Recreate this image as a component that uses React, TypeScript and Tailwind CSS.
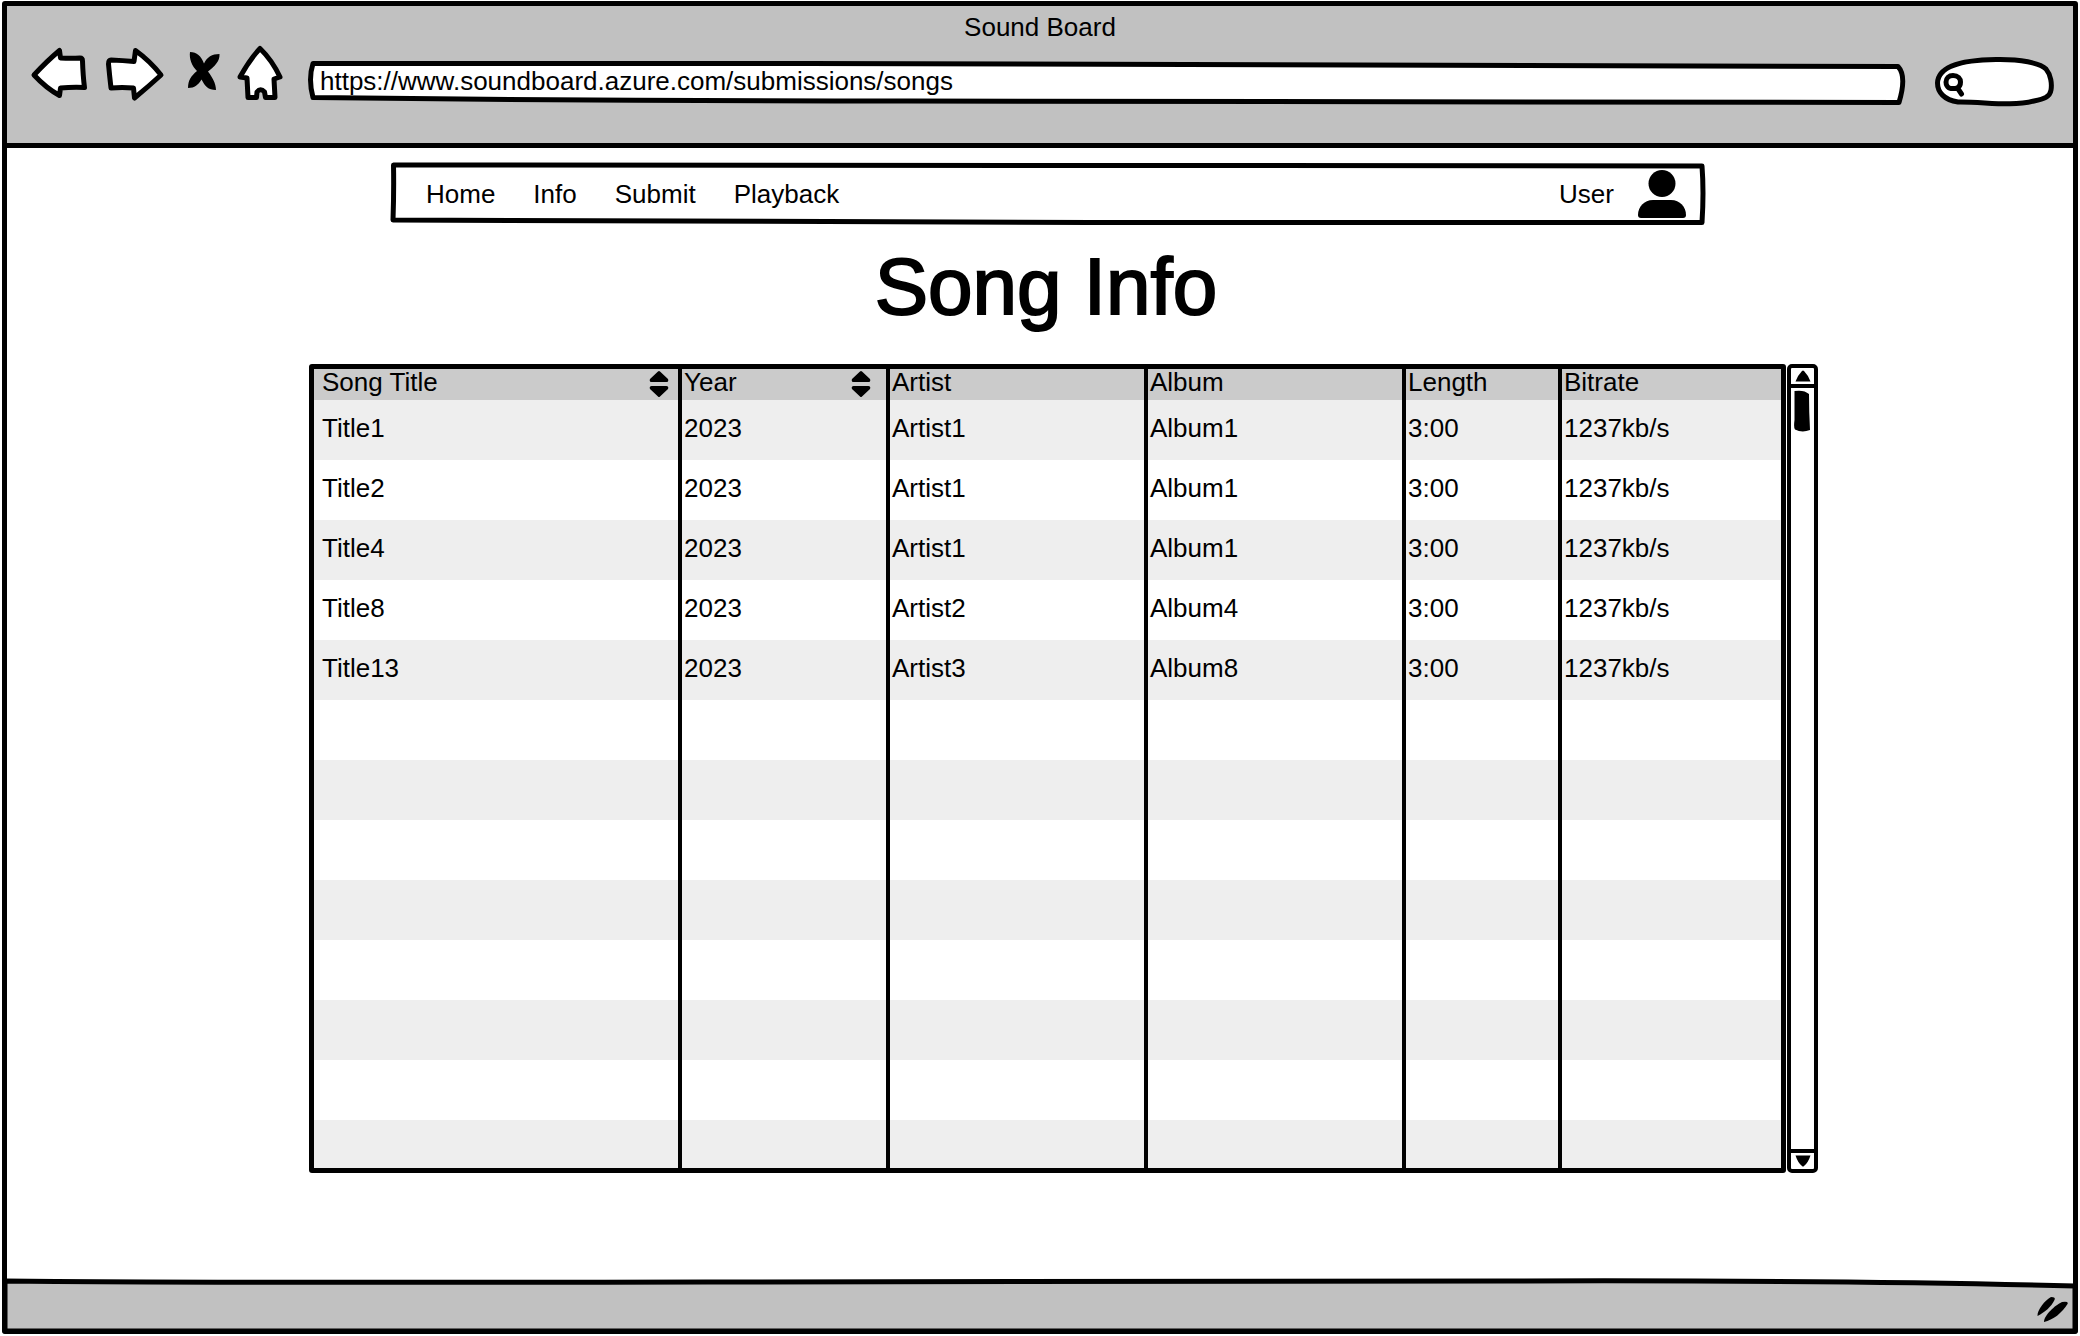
import type { ReactNode } from "react";

type Song = {
  title: string;
  year: string;
  artist: string;
  album: string;
  length: string;
  bitrate: string;
};

const songs: Song[] = [
  { title: "Title1", year: "2023", artist: "Artist1", album: "Album1", length: "3:00", bitrate: "1237kb/s" },
  { title: "Title2", year: "2023", artist: "Artist1", album: "Album1", length: "3:00", bitrate: "1237kb/s" },
  { title: "Title4", year: "2023", artist: "Artist1", album: "Album1", length: "3:00", bitrate: "1237kb/s" },
  { title: "Title8", year: "2023", artist: "Artist2", album: "Album4", length: "3:00", bitrate: "1237kb/s" },
  { title: "Title13", year: "2023", artist: "Artist3", album: "Album8", length: "3:00", bitrate: "1237kb/s" },
];

const columns: { key: keyof Song; label: string; sortable?: boolean; width: string }[] = [
  { key: "title", label: "Song Title", sortable: true, width: "w-[364px]" },
  { key: "year", label: "Year", sortable: true, width: "w-[208px]" },
  { key: "artist", label: "Artist", width: "w-[258px]" },
  { key: "album", label: "Album", width: "w-[258px]" },
  { key: "length", label: "Length", width: "w-[156px]" },
  { key: "bitrate", label: "Bitrate", width: "w-auto" },
];

const emptyRows = [0, 1, 2, 3, 4, 5, 6, 7];

/* Hand-drawn outline that stretches with the box it sits in. */
function SketchOutline({ viewBox, d, fill = "#fff" }: { viewBox: string; d: string; fill?: string }) {
  return (
    <svg
      aria-hidden="true"
      viewBox={viewBox}
      preserveAspectRatio="none"
      className="pointer-events-none absolute inset-0 h-full w-full overflow-visible"
    >
      <path d={d} fill={fill} stroke="#000" strokeWidth="5" strokeLinejoin="round" strokeLinecap="round" vectorEffect="non-scaling-stroke" />
    </svg>
  );
}

function ToolButton({ label, viewBox, width, children }: { label: string; viewBox: string; width: string; children: ReactNode }) {
  return (
    <button type="button" aria-label={label} className={"h-16 shrink-0 " + width}>
      <svg viewBox={viewBox} className="block h-full w-full" strokeWidth="5" strokeLinejoin="round" strokeLinecap="round">
        {children}
      </svg>
    </button>
  );
}

function BrowserBar() {
  return (
    <header className="border-b-5 border-black bg-[#c1c1c1] pt-[3px]">
      <div className="text-center leading-9">Sound Board</div>
      <div className="flex gap-3 pr-[17px] pb-[34px] pl-[21px]">
        <ToolButton label="Back" viewBox="28 45 64 64" width="w-16">
          <path d="M34 75 Q47 61 59.5 50.5 L60.5 58 Q71 58.5 80 58 Q82.500 58 82.500 61 Q83 76 84.500 87.500 Q72 87 60.500 88 L59.500 95.500 Q46 88 34 75Z" fill="#fff" stroke="#000" />
        </ToolButton>
        <ToolButton label="Forward" viewBox="104 45 64 64" width="w-16">
          <path d="M111 60 Q123 60.500 134 61.500 L135.500 50.500 Q150 61 161 75 Q149 86 134.500 98 L133.500 88 Q122 87 111 88 Q109.500 75 108.500 64 Q108.500 60 111 60Z" fill="#fff" stroke="#000" />
        </ToolButton>
        <ToolButton label="Stop" viewBox="180 45 44 64" width="w-11">
          <path d="M190 52 C197 52 201 56 204 63.500 C207 57 212 54 219.500 54 C220 61 215 66 208 71.500 C212 77 216 83 216 90 C208 90 205 86 201.500 79.500 C198 85 195 88 188 88 C188 80 191 76 197 71 C192 66 189 59 190 52Z" fill="#000" />
        </ToolButton>
        <ToolButton label="Home" viewBox="236 45 52 64" width="w-13">
          <path d="M260 48.500 Q272 60 280 77 L274 79 Q274.500 88 275 97.500 L265.500 97.500 L264.500 92 Q260.500 87.500 257 92 L256.500 97.500 L248 97.500 Q247.500 87 247 78 L240 77 Q250 59 260 48.500Z" fill="#fff" stroke="#000" />
        </ToolButton>
        <div className="relative mt-4 ml-2 h-11 min-w-0 flex-1">
          <SketchOutline viewBox="0 0 1598 44" d="M5 2.500 L500 2.500 Q1000 2.500 1590 5.500 Q1599 15 1591 41.500 Q1100 42 600 40 Q300 40 5 36.500 Q0 18 5 2.500Z" />
          <input
            type="text"
            aria-label="Address"
            defaultValue="https://www.soundboard.azure.com/submissions/songs"
            className="relative h-full w-full bg-transparent pr-3 pb-[3px] pl-3 outline-none"
          />
        </div>
        <div className="relative ml-4 h-16 w-[122px] shrink-0">
          <svg aria-hidden="true" viewBox="1934 45 122 64" className="absolute inset-0 h-full w-full" fill="none" stroke="#000" strokeWidth="5" strokeLinecap="round">
            <path d="M1937.500 83 C1938 68 1958 60 1996 59.500 C2020 59 2040 63 2046 69 C2051 75 2052 84 2051 90 C2050 97 2044 99 2034 101 C2010 107 1984 101.500 1958 102 C1944 100 1937.500 92 1937.500 83Z" fill="#fff" />
            <path d="M1953 75.500 C1958 75.500 1960.500 79 1960.500 82 C1960.500 88 1956 89 1951 88.500 C1947 88 1946 84 1946 82 C1946 78 1949 75.500 1953 75.500Z M1957.500 88 L1961.500 94" />
          </svg>
          <input type="search" aria-label="Search" className="relative h-full w-full bg-transparent pr-4 pl-8 outline-none" />
        </div>
      </div>
    </header>
  );
}

function SiteNav() {
  return (
    <nav className="relative mt-[14px] mr-[368px] ml-[383px] flex h-[63px] items-center gap-[38px] pr-[19px] pl-9">
      <SketchOutline viewBox="0 0 1314 63" d="M3.500 3 Q400 1.500 800 3.500 L1311 4 Q1313 30 1311 60.500 L700 60.500 Q350 60 3 58 Q4 30 3.500 3Z" fill="none" />
      {["Home", "Info", "Submit", "Playback"].map((label) => (
        <a key={label} href="#" className="relative">
          {label}
        </a>
      ))}
      <a href="#" className="relative ml-auto flex items-center gap-6">
        User
        <svg aria-hidden="true" viewBox="0 0 48 48" className="size-12">
          <circle cx="24" cy="13.500" r="13.500" />
          <path d="M15 30 H33 C42 30 48 37 48 45 Q48 48 45 48 H3 Q0 48 0 45 C0 37 6 30 15 30Z" />
        </svg>
      </a>
    </nav>
  );
}

function SongTable() {
  return (
    <div className="min-w-0 flex-1 rounded-[3px] border-5 border-black">
      <table className="w-full table-fixed border-separate border-spacing-0 text-left">
        <colgroup>
          {columns.map((c) => (
            <col key={c.key} className={c.width} />
          ))}
        </colgroup>
        <thead>
          <tr className="h-[31px] bg-[#cbcbcb]">
            {columns.map((c) => (
              <th key={c.key} scope="col" className="border-l-4 border-black p-0 pr-[15px] pl-[2px] font-normal first:border-l-0 first:pr-[9px] first:pl-2">
                <div className="flex h-[31px] items-start justify-between">
                  <span className="leading-[27px]">{c.label}</span>
                  {c.sortable && (
                    <button type="button" aria-label={"Sort by " + c.label} className="mt-[2px]">
                      <svg viewBox="0 0 20 26" className="block h-[26px] w-5">
                        <path d="M9 0.500 Q10 -0.500 11 0.500 L19 8 Q20 11 17.500 11 H2.500 Q0 11 1 8Z M9 25.500 Q10 26.500 11 25.500 L19 18 Q20 15 17.500 15 H2.500 Q0 15 1 18Z" />
                      </svg>
                    </button>
                  )}
                </div>
              </th>
            ))}
          </tr>
        </thead>
        <tbody>
          {songs.map((song) => (
            <tr key={song.title} className="h-15 odd:bg-[#eeeeee]">
              {columns.map((c) => (
                <td key={c.key} className="border-l-4 border-black p-0 pb-1 pl-[2px] first:border-l-0 first:pl-2">
                  {song[c.key]}
                </td>
              ))}
            </tr>
          ))}
          {emptyRows.map((row) => (
            <tr key={row} className="h-15 last:h-12 odd:bg-[#eeeeee]">
              {columns.map((c) => (
                <td key={c.key} className="border-l-4 border-black p-0 first:border-l-0" />
              ))}
            </tr>
          ))}
        </tbody>
      </table>
    </div>
  );
}

function ScrollBar() {
  return (
    <div className="flex w-[31px] shrink-0 flex-col rounded-[5px] border-4 border-black bg-white">
      <button type="button" aria-label="Scroll up" className="flex h-5 items-center justify-center border-b-4 border-black">
        <svg viewBox="0 0 16 12" className="h-3 w-4">
          <path d="M7 1 Q8 0 9 1 Q13 5 15.500 11.500 H0.500 Q3 5 7 1Z" />
        </svg>
      </button>
      <div className="flex-1 pt-[2px] pl-[3px]">
        <svg aria-hidden="true" viewBox="0 0 16 42" className="h-[42px] w-4">
          <path d="M0.500 1 Q10 -0.500 15 4 Q15 22 16 40 Q8 43 1 39.500 Q-0.500 38 0.500 30Z" />
        </svg>
      </div>
      <button type="button" aria-label="Scroll down" className="flex h-5 items-center justify-center border-t-4 border-black">
        <svg viewBox="0 0 16 12" className="h-3 w-4">
          <path d="M0.500 0.500 H15.500 Q13 8 9 11 Q8 12 7 11 Q3 8 0.500 0.500Z" />
        </svg>
      </button>
    </div>
  );
}

function StatusBar() {
  return (
    <footer className="relative flex h-12 items-center justify-end pr-[5px]">
      <SketchOutline viewBox="0 0 2066 48" d="M-2 0 Q200 2 700 1 L1500 0 Q1850 -1 2068 5 V50 H-2Z" fill="#c1c1c1" />
      <svg aria-hidden="true" viewBox="2036 1295 32 30" className="relative mt-2 h-[30px] w-8">
        <path d="M2037.500 1317 C2037 1311 2045 1301 2051 1298 Q2056 1298 2054.500 1301 C2051 1308 2045 1313 2037.500 1317Z" />
        <path d="M2044 1323 C2043.500 1317 2055 1306 2062 1303 Q2069 1302 2067.500 1305 C2062 1314 2053 1321 2044 1323Z" />
      </svg>
    </footer>
  );
}

export default function App() {
  return (
    <div className="flex min-h-screen flex-col bg-white pt-px pr-[2px] pb-[2px] pl-[2px] font-['Liberation_Sans',sans-serif] text-[26px] leading-8 text-black">
      <div className="flex flex-1 flex-col rounded-[3px] border-5 border-black">
        <BrowserBar />
        <main className="flex-1 pb-8">
          <SiteNav />
          <h1 className="mt-5 pl-3 text-center text-[80px] leading-[84px] font-normal [-webkit-text-stroke:2px_#000]">Song Info</h1>
          <div className="mt-[35px] mr-[255px] ml-[302px] flex gap-px">
            <SongTable />
            <ScrollBar />
          </div>
        </main>
        <StatusBar />
      </div>
    </div>
  );
}
